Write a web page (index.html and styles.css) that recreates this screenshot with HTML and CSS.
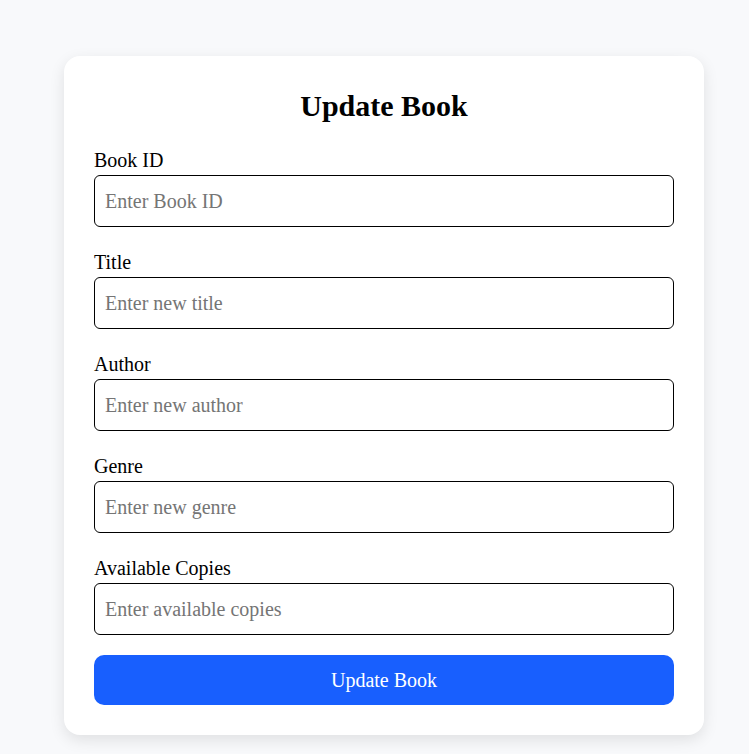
FILE: index.html
```html
<!DOCTYPE html>
<html lang="en">
<head>
<meta charset="utf-8">
<title>Update Book</title>
<link rel="stylesheet" href="styles.css">
</head>
<body>
  <div class="card">
    <h2 class="card-title">Update Book</h2>
    <form class="form">
      <div class="group">
        <label class="label" for="bookId">Book ID</label>
        <input class="input" id="bookId" type="text" placeholder="Enter Book ID">
      </div>
      <div class="group">
        <label class="label" for="title">Title</label>
        <input class="input" id="title" type="text" placeholder="Enter new title">
      </div>
      <div class="group">
        <label class="label" for="author">Author</label>
        <input class="input" id="author" type="text" placeholder="Enter new author">
      </div>
      <div class="group">
        <label class="label" for="genre">Genre</label>
        <input class="input" id="genre" type="text" placeholder="Enter new genre">
      </div>
      <div class="group group-last">
        <label class="label" for="copies">Available Copies</label>
        <input class="input" id="copies" type="number" placeholder="Enter available copies">
      </div>
      <button class="btn" type="button">Update Book</button>
    </form>
  </div>
</body>
</html>
```
FILE: styles.css
```css
html, body {
  margin: 0;
  padding: 0;
}
body {
  background: #f8f9fb;
  font-family: "Liberation Serif", "Times New Roman", serif;
  font-size: 20px;
  color: #000;
  padding: 56px 0 0 64px;
  min-height: 754px;
  box-sizing: border-box;
}
.card {
  width: 640px;
  box-sizing: border-box;
  padding: 30px;
  background: #fff;
  border-radius: 16px;
  box-shadow: 0 5px 15px rgba(0, 0, 0, 0.1);
}
.card-title {
  font-size: 30px;
  font-weight: bold;
  text-align: center;
  margin: 3px 0 26px;
}
.form {
  display: block;
}
.group {
  margin-bottom: 24px;
}
.group-last {
  margin-bottom: 20px;
}
.label {
  display: block;
  margin-bottom: 3px;
  font-size: 20px;
}
.input {
  display: block;
  width: 100%;
  height: 52px;
  box-sizing: border-box;
  padding: 0 10px;
  border: 1px solid #000;
  border-radius: 6px;
  font-family: "Liberation Serif", "Times New Roman", serif;
  font-size: 20px;
  color: #000;
  background: #fff;
  outline: none;
  -moz-appearance: textfield;
}
.input::-webkit-outer-spin-button,
.input::-webkit-inner-spin-button {
  -webkit-appearance: none;
  margin: 0;
}
.input::placeholder {
  color: #757575;
}
.btn {
  display: block;
  width: 100%;
  height: 50px;
  border: none;
  border-radius: 10px;
  background: #185ffe;
  color: #fff;
  font-family: "Liberation Serif", "Times New Roman", serif;
  font-size: 20px;
  cursor: pointer;
}
```
